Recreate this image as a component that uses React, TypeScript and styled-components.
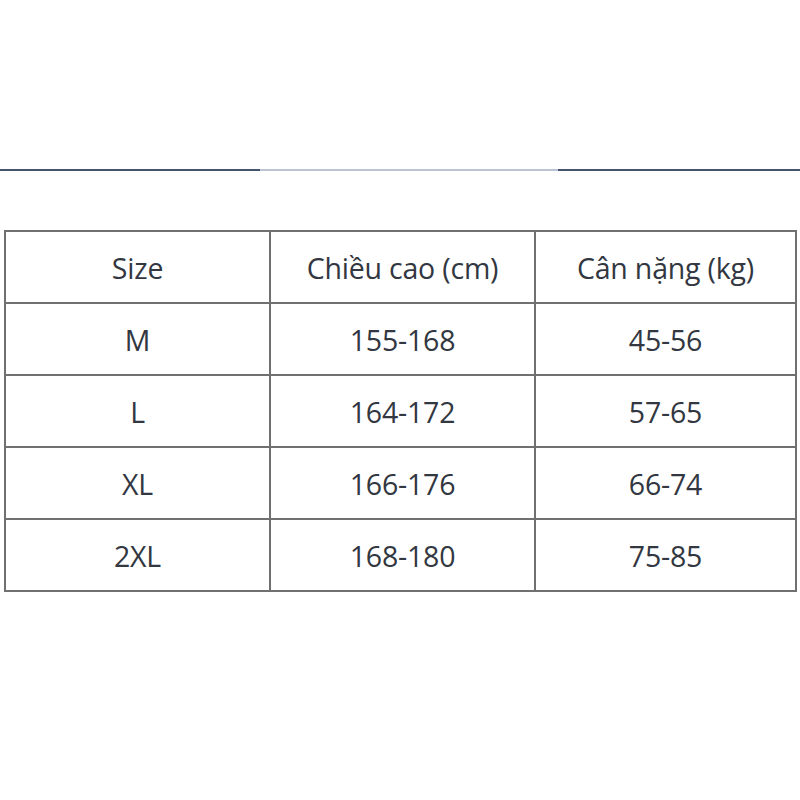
import React from 'react';
import styled, { createGlobalStyle } from 'styled-components';

const GlobalStyle = createGlobalStyle`
  html, body {
    margin: 0;
    padding: 0;
    background: #ffffff;
  }
  body {
    font-family: 'Open Sans', 'Noto Sans', sans-serif;
  }
`;

const Page = styled.div`
  width: 800px;
  height: 800px;
  padding-top: 169px;
  box-sizing: border-box;
`;

const Rule = styled.div`
  height: 2px;
  background: linear-gradient(
    to right,
    #45546d 0,
    #45546d 260px,
    #bcc3d3 260px,
    #bcc3d3 558px,
    #45546d 558px,
    #45546d 100%
  );
`;

const Table = styled.div`
  margin: 59px 3px 0 4px;
  display: grid;
  grid-template-columns: 265px 265px 1fr;
  border-top: 2px solid #707070;
  border-left: 2px solid #707070;
`;

const Cell = styled.div`
  height: 72px;
  display: flex;
  align-items: center;
  justify-content: center;
  border-right: 2px solid #707070;
  border-bottom: 2px solid #707070;
  color: #323741;
  font-size: 28.5px;
  letter-spacing: -0.2px;
  padding-top: 2px;
  box-sizing: border-box;
`;

const rows = [
  ['Size', 'Chiều cao (cm)', 'Cân nặng (kg)'],
  ['M', '155-168', '45-56'],
  ['L', '164-172', '57-65'],
  ['XL', '166-176', '66-74'],
  ['2XL', '168-180', '75-85'],
];

export default function App() {
  return (
    <Page>
      <GlobalStyle />
      <Rule />
      <Table>
        {rows.map((row, i) =>
          row.map((text, j) => <Cell key={`${i}-${j}`}>{text}</Cell>)
        )}
      </Table>
    </Page>
  );
}
